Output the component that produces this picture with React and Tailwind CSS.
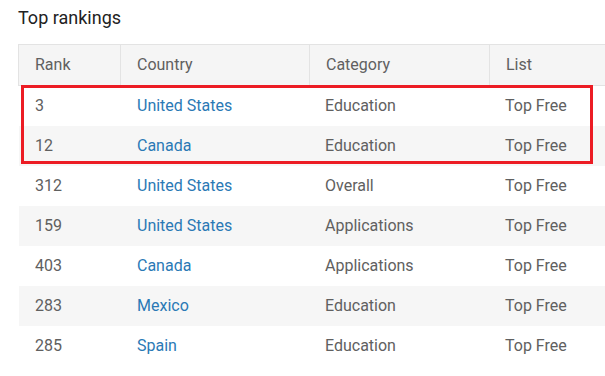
import React from "react";

const rows = [
  { rank: 3, country: "United States", category: "Education", list: "Top Free" },
  { rank: 12, country: "Canada", category: "Education", list: "Top Free" },
  { rank: 312, country: "United States", category: "Overall", list: "Top Free" },
  { rank: 159, country: "United States", category: "Applications", list: "Top Free" },
  { rank: 403, country: "Canada", category: "Applications", list: "Top Free" },
  { rank: 283, country: "Mexico", category: "Education", list: "Top Free" },
  { rank: 285, country: "Spain", category: "Education", list: "Top Free" },
];

export default function App() {
  return (
    <div
      className="w-[605px] h-[376px] overflow-hidden bg-white"
      style={{ fontFamily: "Roboto, 'Noto Sans', sans-serif" }}
    >
      <h1 className="text-[18px] leading-none text-[#222] pl-[18px] pt-[9px] h-[44px]">
        Top rankings
      </h1>

      <div className="relative ml-[18px] w-[700px]">
        <table className="border-collapse table-fixed w-[700px] text-[16px] text-[#606060]">
          <colgroup>
            <col className="w-[102px]" />
            <col className="w-[189px]" />
            <col className="w-[180px]" />
            <col className="w-[229px]" />
          </colgroup>
          <thead>
            <tr className="bg-[#f5f5f5] h-[41px]">
              {["Rank", "Country", "Category", "List"].map((h) => (
                <th
                  key={h}
                  className="font-normal text-left pl-4 border border-[#e3e3e3] align-middle"
                >
                  {h}
                </th>
              ))}
            </tr>
          </thead>
          <tbody>
            {rows.map((r, i) => (
              <tr key={i} className={`h-[40px] ${i % 2 === 1 ? "bg-[#f6f6f6]" : "bg-white"}`}>
                <td className="pl-4 border-l border-transparent">{r.rank}</td>
                <td className="pl-4 border-l border-transparent text-[#2a79b5]">{r.country}</td>
                <td className="pl-[15px] border-l border-transparent">{r.category}</td>
                <td className="pl-[15px] border-l border-transparent">{r.list}</td>
              </tr>
            ))}
          </tbody>
        </table>

        {/* highlight box over first two rows */}
        <div className="absolute left-[3px] top-[41px] w-[572px] h-[79px] border-[3px] border-[#ec1c24] pointer-events-none" />
      </div>
    </div>
  );
}
